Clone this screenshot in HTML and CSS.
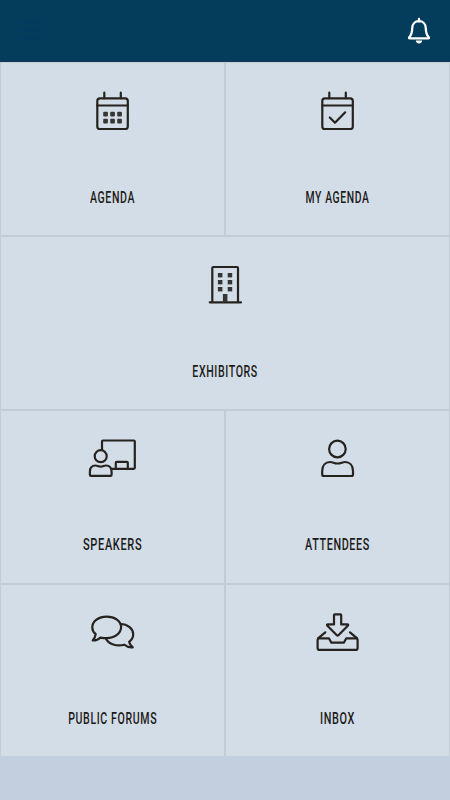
FILE: index.html
```html
<!DOCTYPE html>
<html lang="en">
<head>
    <meta charset="UTF-8">
    <title>Event Menu</title>
    <link rel="stylesheet" href="styles.css">
</head>
<body>
    <header class="topbar">
        <svg class="menu" width="24" height="24" viewBox="0 0 24 24">
            <path d="M1 5.5H23M1 13.5H23M1 21.5H23"/>
        </svg>
        <svg class="bell" width="24" height="28" viewBox="0 0 24 28">
            <path d="M12 2V4.5M12 4.2C7.8 4.2 5.3 7.2 5.2 11.2C5.1 15.8 4.4 18 2.3 20.2C1.8 20.9 2 21.4 2.7 21.4H21.3C22 21.4 22.2 20.9 21.7 20.2C19.6 18 18.9 15.8 18.8 11.2C18.7 7.2 16.2 4.2 12 4.2Z"/>
            <path class="clapper" d="M8.8 23.4H15.2C14.9 25.4 13.8 26.4 12 26.4S9.1 25.4 8.8 23.4Z"/>
        </svg>
    </header>

    <main class="tiles">
        <a class="tile">
            <svg class="icon" width="61" height="50" viewBox="0 -0.7 61 50">
                <rect x="15.3" y="10.7" width="30.5" height="30.6" rx="2.6"/>
                <path d="M15.3 17.8H45.8M22.3 5V10.5M38.8 5V10.5"/>
                <g class="solid">
                    <rect x="21.2" y="24" width="4.7" height="4.7" rx="1"/>
                    <rect x="28.2" y="24" width="4.7" height="4.7" rx="1"/>
                    <rect x="35.2" y="24" width="4.7" height="4.7" rx="1"/>
                    <rect x="21.2" y="31" width="4.7" height="4.7" rx="1"/>
                    <rect x="28.2" y="31" width="4.7" height="4.7" rx="1"/>
                    <rect x="35.2" y="31" width="4.7" height="4.7" rx="1"/>
                </g>
            </svg>
            <svg class="label" width="181" height="24"><text x="68" y="17.5" textLength="45.1" lengthAdjust="spacingAndGlyphs">AGENDA</text></svg>
        </a>
        <a class="tile">
            <svg class="icon" width="61" height="50" viewBox="0 -0.7 61 50">
                <rect x="15.3" y="10.7" width="30.5" height="30.6" rx="2.6"/>
                <path d="M15.3 17.8H45.8M22.3 5V10.5M38.8 5V10.5"/>
                <path d="M22.8 29.8L28 35L38.2 24.6"/>
            </svg>
            <svg class="label" width="181" height="24"><text x="58.5" y="17.5" textLength="64" lengthAdjust="spacingAndGlyphs">MY AGENDA</text></svg>
        </a>
        <a class="tile wide">
            <svg class="icon" width="60" height="50" viewBox="0.5 0 60 50">
                <path d="M15.2 41.3H46.5M17.8 41V7Q17.8 6 18.8 6H42.5Q43.5 6 43.5 7V41"/>
                <g class="solid">
                    <rect x="23.4" y="12" width="4.5" height="4.4"/>
                    <rect x="33.2" y="12" width="4.5" height="4.4"/>
                    <rect x="23.4" y="19" width="4.5" height="4.4"/>
                    <rect x="33.2" y="19" width="4.5" height="4.4"/>
                    <rect x="23.4" y="26" width="4.5" height="4.4"/>
                    <rect x="33.2" y="26" width="4.5" height="4.4"/>
                    <rect x="28.4" y="33" width="4.5" height="8"/>
                </g>
            </svg>
            <svg class="label" width="180" height="24"><text x="57.3" y="17.5" textLength="65.6" lengthAdjust="spacingAndGlyphs">EXHIBITORS</text></svg>
        </a>
        <a class="tile">
            <svg class="icon" width="61" height="50" viewBox="0 0 61 50">
                <circle cx="18.7" cy="21.2" r="6"/>
                <path d="M9 40.9Q7.9 40.9 7.9 39.8V37C7.9 33 10 30.5 13.5 30.5C15.5 30.5 16.2 31.6 18.7 31.6S21.9 30.5 23.9 30.5C27.5 30.5 29.6 33 29.6 37V39.8Q29.6 40.9 28.5 40.9Z"/>
                <path d="M20 14.5V6.5Q20 5.5 21 5.5H51.8Q52.8 5.5 52.8 6.5V32.8Q52.8 33.8 51.8 33.8H29.5"/>
                <path d="M33.8 33.5V27.8Q33.8 26.9 34.7 26.9H44.9Q45.8 26.9 45.8 27.8V33.5"/>
            </svg>
            <svg class="label" width="181" height="24"><text x="61" y="17" textLength="59.3" lengthAdjust="spacingAndGlyphs">SPEAKERS</text></svg>
        </a>
        <a class="tile">
            <svg class="icon" width="61" height="50" viewBox="0 0 61 50">
                <circle cx="30.4" cy="14" r="8.3"/>
                <path d="M16.7 41Q15.2 41 15.2 39.5V36C15.2 30.5 18.4 27 23.2 27C26 27 27 28.5 30.6 28.5S35.2 27 38 27C42.8 27 46 30.5 46 36V39.5Q46 41 44.5 41Z"/>
            </svg>
            <svg class="label" width="181" height="24"><text x="58" y="17" textLength="65" lengthAdjust="spacingAndGlyphs">ATTENDEES</text></svg>
        </a>
        <a class="tile">
            <svg class="icon" width="61" height="50" viewBox="0 0 61 50">
                <path d="M18.5 28.6C20.5 29 22.5 29.2 24.7 29.2C32.8 29.2 39.1 24.3 39.1 18.1S32.8 7.6 24.7 7.6S10.3 12.3 10.3 18.4C10.3 21 11.6 23.4 13.7 25.2C13.4 27.8 12.3 29.6 10.7 31.4C13.8 31.5 16.4 30.6 18.5 28.6Z"/>
                <path d="M38.6 15C45.8 15.1 51.2 19.6 51.2 25.2C51.2 28.2 49.6 30.9 47.1 32.8C47.5 35 48.8 36.8 50.8 38.3C47.5 38.6 44.7 37.7 42.5 35.7C34.5 37.7 26.7 35.3 23.7 29.5"/>
            </svg>
            <svg class="label" width="181" height="24"><text x="46.2" y="17" textLength="89" lengthAdjust="spacingAndGlyphs">PUBLIC FORUMS</text></svg>
        </a>
        <a class="tile">
            <svg class="icon" width="61" height="50" viewBox="0 0 61 50">
                <path d="M27 6.2Q27 5.4 27.8 5.4H33.4Q34.2 5.4 34.2 6.2V15.4H40.2Q41.9 15.4 40.8 16.7L31.4 26.2Q30.6 27 29.8 26.2L20.4 16.7Q19.3 15.4 21 15.4H27Z"/>
                <path d="M18.3 23.3L11.3 29.2Q10.6 29.9 10.6 31V38.9Q10.6 40.9 12.6 40.9H48.6Q50.6 40.9 50.6 38.9V31Q50.6 29.9 49.9 29.2L43 23.3"/>
                <path d="M11.3 29.3H21.9L24.4 33.7H36.8L39.3 29.3H49.9"/>
            </svg>
            <svg class="label" width="181" height="24"><text x="73" y="17" textLength="35" lengthAdjust="spacingAndGlyphs">INBOX</text></svg>
        </a>
    </main>
</body>
</html>
```

FILE: styles.css
```css
* {
    box-sizing: border-box;
}
body {
    margin: 0;
    min-height: 800px;
    background-color: #c3cfdf;
    font-family: Roboto, "Liberation Sans", sans-serif;
}
.topbar {
    display: flex;
    justify-content: space-between;
    height: 62px;
    padding: 17px 19px 0 19px;
    background-color: #033d5b;
    border-bottom: 1px solid #16385f;
}
.menu {
    stroke: #033a60;
    stroke-width: 3;
}
.bell {
    fill: none;
    stroke: white;
    stroke-width: 2.3;
    stroke-linecap: round;
}
.bell .clapper {
    fill: white;
    stroke: none;
}
.tiles {
    display: grid;
    grid-template-columns: 1fr 1fr;
    grid-template-rows: 174px 174px 174px 172px;
}
.tile {
    display: flex;
    flex-direction: column;
    align-items: center;
    padding-top: 24px;
    background-color: #d3dde7;
    border: 1px solid #c2ccd7;
}
.tile:nth-last-child(-n+2) {
    border-bottom: none;
}
.wide {
    grid-column: span 2;
}
.icon {
    fill: none;
    stroke: #26231f;
    stroke-width: 2.2;
    stroke-linecap: round;
    stroke-linejoin: round;
}
.solid {
    fill: #383634;
    stroke: none;
}
.label {
    margin-top: 48px;
    overflow: visible;
    fill: #1d1b19;
    font-size: 17px;
    font-weight: 500;
    letter-spacing: 1px;
}
```
